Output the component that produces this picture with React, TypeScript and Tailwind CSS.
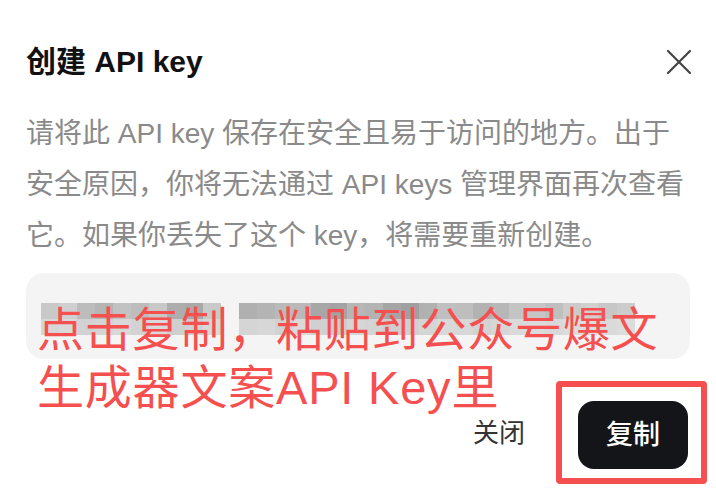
const FONT = '"Liberation Sans", "Noto Sans CJK SC", sans-serif';

// mosaic shades for the blurred key
const TOP_ROW = [
  '#c9c9c9', '#cfcfcf', '#bcbcbc', '#b5b5b5', '#c2c2c2', '#bdbdbd', '#c8c8c8', '#adadad', '#a9a9a9', '#c9c9c9',
  '#ffffff', '#b0b0b0', '#b4b4b4', '#bababa', '#b9b9b9', '#a7a7a7', '#a3a3a3', '#b6b6b6', '#b3b3b3', '#a5a5a5',
  '#a0a0a0', '#b1b1b1', '#c0c0c0', '#bebebe', '#b2b2b2', '#b7b7b7', '#c4c4c4', '#c6c6c6', '#bfbfbf', '#cbcbcb',
  '#d0d0d0', '#c7c7c7', '#cccccc',
];
const BOTTOM_ROW = [
  '#d6d6d6', '#d9d9d9', '#d2d2d2', '#d4d4d4', '#d8d8d8', '#d3d3d3', '#dadada', '#cfcfcf', '#d1d1d1', '#d8d8d8',
  '#ffffff', '#d5d5d5', '#d7d7d7', '#d2d2d2', '#d9d9d9', '#d0d0d0', '#cdcdcd', '#d6d6d6', '#d4d4d4', '#cecece',
  '#d0d0d0', '#d5d5d5', '#d9d9d9', '#d7d7d7', '#d3d3d3', '#d6d6d6', '#dadada', '#dbdbdb', '#d8d8d8', '#dcdcdc',
  '#dddddd', '#dadada', '#dcdcdc',
];

function BlurredKey() {
  return (
    <div className="flex flex-col">
      {[TOP_ROW, BOTTOM_ROW].map((row, r) => (
        <div key={r} className="flex">
          {row.map((c, i) => (
            <div key={i} className="w-[18px] h-[16px]" style={{ backgroundColor: c === '#ffffff' ? 'transparent' : c }} />
          ))}
        </div>
      ))}
    </div>
  );
}

function CloseIcon() {
  return (
    <svg width="26" height="26" viewBox="0 0 26 26" className="mr-[-2px]">
      <path d="M2 2 L24 24 M24 2 L2 24" stroke="#444" strokeWidth="2.2" strokeLinecap="round" fill="none" />
    </svg>
  );
}

export default function App() {
  return (
    <div className="relative w-[716px] h-[494px] overflow-hidden bg-white px-[26px]" style={{ fontFamily: FONT }}>
      {/* header */}
      <div className="flex items-center justify-between pt-[42px] h-[82px]">
        <h2 className="text-[30px] leading-[40px] font-semibold text-[#111]">创建 API key</h2>
        <CloseIcon />
      </div>

      {/* description */}
      <p className="mt-[26px] text-[28px] leading-[51px] text-[#8a8a8a]">
        请将此 API key 保存在安全且易于访问的地方。出于安全原因，你将无法通过 API keys 管理界面再次查看它。如果你丢失了这个 key，将需要重新创建。
      </p>

      {/* key field */}
      <div className="mt-[12px] h-[86px] rounded-[18px] bg-[#f4f4f4] pl-[15px] pt-[30px]">
        <BlurredKey />
      </div>

      {/* annotation overlay */}
      <div className="absolute left-[37px] top-[301px] text-[47px] leading-[58px] tracking-[0.8px] text-[#f5504f]">
        <div>点击复制，粘贴到公众号爆文</div>
        <div>生成器文案API Key里</div>
      </div>

      {/* footer */}
      <div className="flex items-center justify-end gap-[31px] mt-[22px] mr-[-17px]">
        <button className="text-[26px] leading-[34px] text-[#333]">关闭</button>
        <div className="border-[6px] border-[#f5504f] rounded-[4px] pt-[14px] pb-[9px] pl-[16px] pr-[13px]">
          <button className="w-[110px] h-[68px] rounded-[16px] bg-[#141518] text-white text-[27px] font-medium">复制</button>
        </div>
      </div>
    </div>
  );
}
